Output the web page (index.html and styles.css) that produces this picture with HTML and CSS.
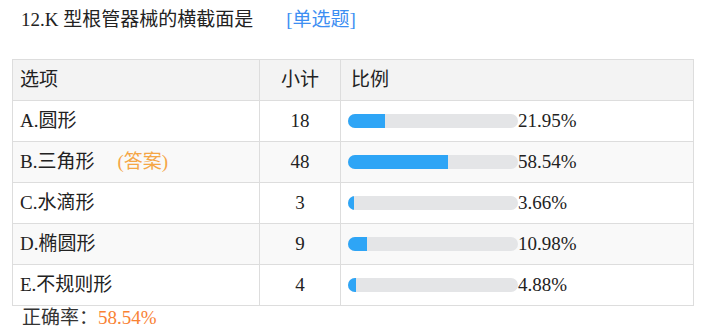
FILE: index.html
```html
<!DOCTYPE html>
<html lang="zh-CN">
<head>
<meta charset="utf-8">
<link rel="stylesheet" href="styles.css">
</head>
<body>
<div class="question">
  <div class="title">12.K 型根管器械的横截面是<span class="qtype">[单选题]</span></div>
  <table class="stats">
    <thead>
      <tr><th class="c-opt">选项</th><th class="c-cnt">小计</th><th class="c-pct">比例</th></tr>
    </thead>
    <tbody>
      <tr><td class="c-opt">A.圆形</td><td class="c-cnt">18</td><td class="c-pct"><span class="bar"><span class="fill" style="width:21.95%"></span></span>21.95%</td></tr>
      <tr><td class="c-opt">B.三角形<span class="answer">(答案)</span></td><td class="c-cnt">48</td><td class="c-pct"><span class="bar"><span class="fill" style="width:58.54%"></span></span>58.54%</td></tr>
      <tr><td class="c-opt">C.水滴形</td><td class="c-cnt">3</td><td class="c-pct"><span class="bar"><span class="fill" style="width:3.66%"></span></span>3.66%</td></tr>
      <tr><td class="c-opt">D.椭圆形</td><td class="c-cnt">9</td><td class="c-pct"><span class="bar"><span class="fill" style="width:10.98%"></span></span>10.98%</td></tr>
      <tr><td class="c-opt">E.不规则形</td><td class="c-cnt">4</td><td class="c-pct"><span class="bar"><span class="fill" style="width:4.88%"></span></span>4.88%</td></tr>
    </tbody>
  </table>
  <div class="accuracy">正确率：<span class="rate">58.54%</span></div>
</div>
</body>
</html>
```

FILE: styles.css
```css
html, body {
  margin: 0;
  padding: 0;
  background: #ffffff;
}
body {
  font-family: "Liberation Serif", "Noto Sans CJK SC", serif;
  font-size: 19px;
  color: #222222;
}
.question {
  padding: 0 14px 0 12px;
}
.title {
  height: 40px;
  line-height: 40px;
  padding-left: 9px;
  color: #222222;
}
.qtype {
  color: #3d8ef2;
  margin-left: 33px;
}
.stats {
  margin-top: 19px;
  width: 682px;
  border-collapse: collapse;
  border: 1px solid #dddddd;
}
.stats th, .stats td {
  border: 1px solid #dddddd;
  height: 40px;
  padding: 0;
  font-weight: normal;
  text-align: left;
  vertical-align: middle;
  line-height: 20px;
}
.stats thead tr {
  background: #f3f3f3;
}
.stats tbody tr:nth-child(even) {
  background: #f9f9f9;
}
.c-opt {
  width: 239px;
  padding-left: 7px !important;
}
.c-cnt {
  width: 80px;
  text-align: center !important;
}
.c-pct {
  padding-left: 7px !important;
}
th.c-pct {
  padding-left: 10px !important;
}
.answer {
  color: #f5a646;
  margin-left: 23px;
}
.bar {
  display: inline-block;
  width: 170px;
  height: 14px;
  border-radius: 7px;
  background: #e4e5e7;
  overflow: hidden;
  vertical-align: -1px;
}
.fill {
  display: block;
  height: 100%;
  background: #2ea5f6;
}
.accuracy {
  padding-left: 10px;
  height: 26px;
  line-height: 24px;
  color: #333333;
}
.rate {
  color: #f98234;
}
```
